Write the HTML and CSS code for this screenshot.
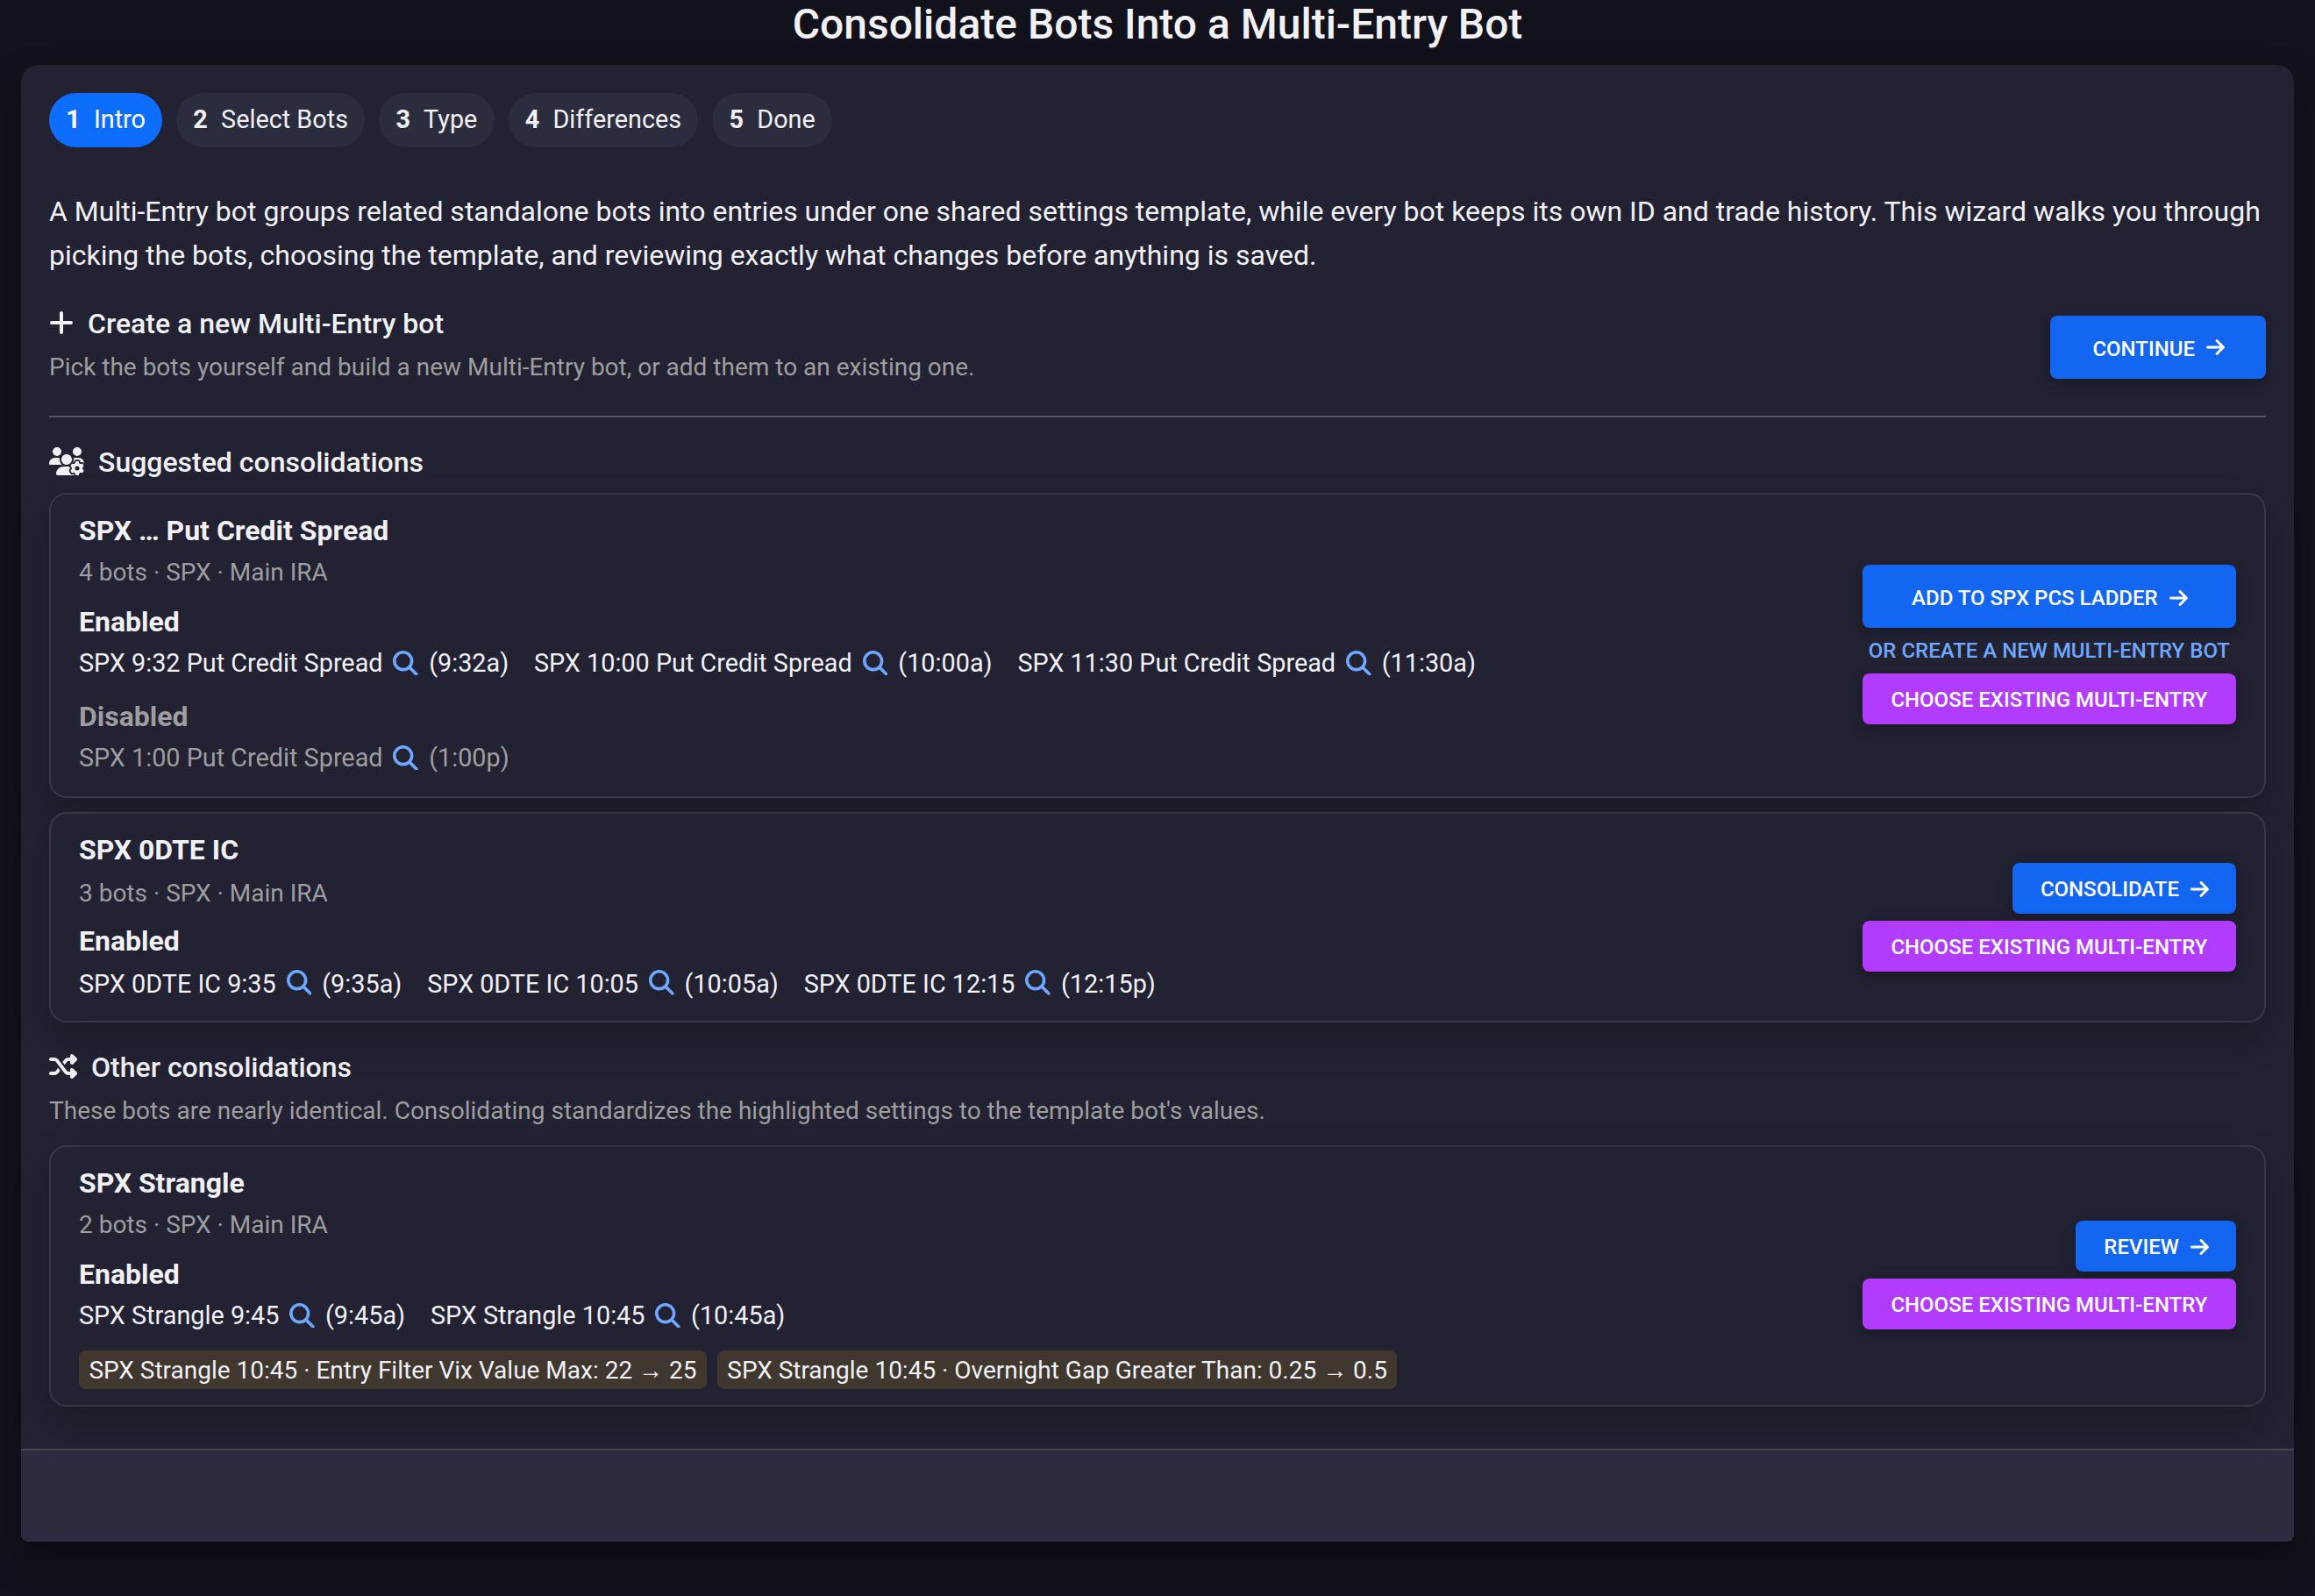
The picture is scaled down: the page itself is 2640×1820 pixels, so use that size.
FILE: index.html
```html
<!DOCTYPE html>
<html lang="en">
<head>
<meta charset="utf-8">
<title>Consolidate Bots Into a Multi-Entry Bot</title>
<link rel="stylesheet" href="styles.css">
</head>
<body>
<svg class="sprite" aria-hidden="true">
  <symbol id="arrow" viewBox="0 0 448 512"><path d="M438.6 278.6c12.5-12.5 12.5-32.8 0-45.3l-160-160c-12.5-12.5-32.8-12.5-45.3 0s-12.5 32.8 0 45.3L338.8 224 32 224c-17.7 0-32 14.3-32 32s14.3 32 32 32l306.7 0L233.4 393.4c-12.5 12.5-12.5 32.8 0 45.3s32.8 12.5 45.3 0l160-160z"/></symbol>
  <symbol id="search" viewBox="0 0 512 512"><path d="M416 208c0 45.9-14.9 88.3-40 122.7L502.6 457.4c12.5 12.5 12.5 32.8 0 45.3s-32.8 12.5-45.3 0L330.7 376c-34.4 25.2-76.8 40-122.7 40C93.1 416 0 322.9 0 208S93.1 0 208 0S416 93.1 416 208zM208 352a144 144 0 1 0 0-288 144 144 0 1 0 0 288z"/></symbol>
  <symbol id="plus" viewBox="0 0 448 512"><path d="M256 80c0-17.7-14.3-32-32-32s-32 14.3-32 32l0 144L48 224c-17.7 0-32 14.3-32 32s14.3 32 32 32l144 0 0 144c0 17.7 14.3 32 32 32s32-14.3 32-32l0-144 144 0c17.7 0 32-14.3 32-32s-14.3-32-32-32l-144 0 0-144z"/></symbol>
  <symbol id="users-gear" viewBox="0 0 640 512"><path d="M144 160A80 80 0 1 0 144 0a80 80 0 1 0 0 160zm368 0A80 80 0 1 0 512 0a80 80 0 1 0 0 160zM0 298.7C0 310.4 9.6 320 21.3 320l213.3 0c.2 0 .4 0 .7 0c-26.6-23.5-43.3-57.8-43.3-96c0-7.6 .7-15 1.9-22.3c-13.6-6.3-28.7-9.7-44.6-9.7l-42.7 0C47.8 192 0 239.8 0 298.7zM320 320c24 0 45.9-8.8 62.7-23.3c2.5-3.7 5.2-7.3 8-10.7c2.7-3.3 5.7-6.1 9-8.3C410 262.3 416 243.9 416 224c0-53-43-96-96-96s-96 43-96 96s43 96 96 96zm65.4 60.2c-10.3-5.9-18.1-16.2-20.8-28.2l-103.2 0C187.7 352 128 411.7 128 485.3c0 14.7 11.9 26.7 26.7 26.7l300.6 0c-2.1-5.2-3.2-10.9-3.2-16.4l0-3c-1.3-.7-2.7-1.5-4-2.3l-2.6 1.5c-16.8 9.7-40.5 8-54.7-9.7c-4.5-5.6-8.6-11.5-12.4-17.6l-.1-.2-.1-.2-2.4-4.1-.1-.2-.1-.2c-3.4-6.2-6.4-12.6-9-19.3c-8.2-21.2 2.2-42.6 19-52.3l2.7-1.5c0-.8 0-1.5 0-2.3s0-1.5 0-2.3l-2.7-1.5zM533.3 192l-42.7 0c-15.9 0-31 3.5-44.6 9.7c1.3 7.2 1.9 14.7 1.9 22.3c0 17.4-3.5 33.9-9.7 49c2.5 .9 4.9 2 7.1 3.3l2.6 1.5c1.3-.8 2.6-1.6 4-2.3l0-3c0-19.4 13.3-39.1 35.8-42.6c7.9-1.2 16-1.9 24.2-1.9s16.3 .6 24.2 1.9c22.5 3.5 35.8 23.2 35.8 42.6l0 3c1.3 .7 2.7 1.5 4 2.3l2.6-1.5c16.8-9.7 40.5-8 54.7 9.7c2.3 2.8 4.5 5.8 6.6 8.7c-2.1-57.1-49-102.7-106.6-102.7zm91.3 163.9c6.3-3.6 9.5-11.1 6.8-18c-2.1-5.5-4.6-10.8-7.4-15.9l-2.3-4c-3.1-5.1-6.5-9.9-10.2-14.5c-4.6-5.7-12.7-6.7-19-3l-2.9 1.7c-9.2 5.3-20.4 4-29.6-1.3s-16.1-14.5-16.1-25.1l0-3.4c0-7.3-4.9-13.8-12.1-14.9c-6.5-1-13.1-1.5-19.9-1.5s-13.4 .5-19.9 1.5c-7.2 1.1-12.1 7.6-12.1 14.9l0 3.4c0 10.6-6.9 19.8-16.1 25.1s-20.4 6.6-29.6 1.3l-2.9-1.7c-6.3-3.6-14.4-2.6-19 3c-3.7 4.6-7.1 9.5-10.2 14.6l-2.3 3.9c-2.8 5.1-5.3 10.4-7.4 15.9c-2.6 6.8 .5 14.3 6.8 17.9l2.9 1.7c9.2 5.3 13.7 15.8 13.7 26.4s-4.5 21.1-13.7 26.4l-3 1.7c-6.3 3.6-9.5 11.1-6.8 17.9c2.1 5.5 4.6 10.7 7.4 15.8l2.4 4.1c3 5.1 6.4 9.9 10.1 14.5c4.6 5.7 12.7 6.7 19 3l2.9-1.7c9.2-5.3 20.4-4 29.6 1.3s16.1 14.5 16.1 25.1l0 3.4c0 7.3 4.9 13.8 12.1 14.9c6.5 1 13.1 1.5 19.9 1.5s13.4-.5 19.9-1.5c7.2-1.1 12.1-7.6 12.1-14.9l0-3.4c0-10.6 6.9-19.8 16.1-25.1s20.4-6.6 29.6-1.3l2.9 1.7c6.3 3.6 14.4 2.6 19-3c3.7-4.6 7.1-9.4 10.1-14.5l2.4-4.2c2.8-5.1 5.3-10.3 7.4-15.8c2.6-6.8-.5-14.3-6.8-17.9l-3-1.7c-9.2-5.3-13.7-15.8-13.7-26.4s4.5-21.1 13.7-26.4l3-1.7zM472 384a40 40 0 1 1 80 0 40 40 0 1 1 -80 0z"/></symbol>
  <symbol id="shuffle" viewBox="0 0 512 512"><path d="M403.8 34.4c12-5 25.7-2.2 34.9 6.9l64 64c6 6 9.4 14.1 9.4 22.6s-3.4 16.6-9.4 22.6l-64 64c-9.2 9.2-22.9 11.9-34.9 6.9s-19.8-16.6-19.8-29.6l0-32-32 0c-10.1 0-19.6 4.7-25.6 12.8L284 229.3 244 176l31.2-41.6C293.3 110.2 321.8 96 352 96l32 0 0-32c0-12.9 7.8-24.6 19.8-29.6zM164 282.7L204 336l-31.2 41.6C154.7 401.8 126.2 416 96 416l-64 0c-17.7 0-32-14.3-32-32s14.3-32 32-32l64 0c10.1 0 19.6-4.7 25.6-12.8L164 282.7zm274.6 188c-9.2 9.2-22.9 11.9-34.9 6.9s-19.8-16.6-19.8-29.6l0-32-32 0c-30.2 0-58.7-14.2-76.8-38.4L121.6 172.8c-6-8.1-15.5-12.8-25.6-12.8l-64 0c-17.7 0-32-14.3-32-32s14.3-32 32-32l64 0c30.2 0 58.7 14.2 76.8 38.4L326.4 339.2c6 8.1 15.5 12.8 25.6 12.8l32 0 0-32c0-12.9 7.8-24.6 19.8-29.6s25.7-2.2 34.9 6.9l64 64c6 6 9.4 14.1 9.4 22.6s-3.4 16.6-9.4 22.6l-64 64z"/></symbol>
</svg>

<h1 class="page-title">Consolidate Bots Into a Multi-Entry Bot</h1>

<main class="panel">
  <div class="panel-body">
    <nav class="steps">
      <span class="step active"><b>1</b>Intro</span>
      <span class="step"><b>2</b>Select Bots</span>
      <span class="step"><b>3</b>Type</span>
      <span class="step"><b>4</b>Differences</span>
      <span class="step"><b>5</b>Done</span>
    </nav>

    <p class="intro">A Multi-Entry bot groups related standalone bots into entries under one shared settings template, while every bot keeps its own ID and trade history. This wizard walks you through picking the bots, choosing the template, and reviewing exactly what changes before anything is saved.</p>

    <section class="create">
      <div class="create-text">
        <h2 class="heading"><svg class="icon-plus"><use href="#plus"/></svg>Create a new Multi-Entry bot</h2>
        <p class="sub">Pick the bots yourself and build a new Multi-Entry bot, or add them to an existing one.</p>
      </div>
      <button class="btn primary large">Continue<svg class="icon-arrow"><use href="#arrow"/></svg></button>
    </section>

    <hr class="divider">

    <section>
      <h2 class="heading"><svg class="icon-users"><use href="#users-gear"/></svg>Suggested consolidations</h2>
      <div class="cards">
        <article class="card card-ladder">
          <div class="details">
            <h3 class="name">SPX … Put Credit Spread</h3>
            <p class="meta">4 bots · SPX · Main IRA</p>
            <h4 class="state">Enabled</h4>
            <div class="bots">
              <span class="bot">SPX 9:32 Put Credit Spread<svg class="icon-search"><use href="#search"/></svg>(9:32a)</span>
              <span class="bot">SPX 10:00 Put Credit Spread<svg class="icon-search"><use href="#search"/></svg>(10:00a)</span>
              <span class="bot">SPX 11:30 Put Credit Spread<svg class="icon-search"><use href="#search"/></svg>(11:30a)</span>
            </div>
            <h4 class="state off">Disabled</h4>
            <div class="bots off">
              <span class="bot">SPX 1:00 Put Credit Spread<svg class="icon-search"><use href="#search"/></svg>(1:00p)</span>
            </div>
          </div>
          <div class="actions fill">
            <button class="btn primary large">Add to SPX PCS Ladder<svg class="icon-arrow"><use href="#arrow"/></svg></button>
            <a class="alt">Or create a new Multi-Entry bot</a>
            <button class="btn purple">Choose existing Multi-Entry</button>
          </div>
        </article>

        <article class="card card-condor">
          <div class="details">
            <h3 class="name">SPX 0DTE IC</h3>
            <p class="meta">3 bots · SPX · Main IRA</p>
            <h4 class="state">Enabled</h4>
            <div class="bots">
              <span class="bot">SPX 0DTE IC 9:35<svg class="icon-search"><use href="#search"/></svg>(9:35a)</span>
              <span class="bot">SPX 0DTE IC 10:05<svg class="icon-search"><use href="#search"/></svg>(10:05a)</span>
              <span class="bot">SPX 0DTE IC 12:15<svg class="icon-search"><use href="#search"/></svg>(12:15p)</span>
            </div>
          </div>
          <div class="actions">
            <button class="btn primary">Consolidate<svg class="icon-arrow"><use href="#arrow"/></svg></button>
            <button class="btn purple">Choose existing Multi-Entry</button>
          </div>
        </article>
      </div>
    </section>

    <section class="other">
      <h2 class="heading"><svg class="icon-shuffle"><use href="#shuffle"/></svg>Other consolidations</h2>
      <p class="sub">These bots are nearly identical. Consolidating standardizes the highlighted settings to the template bot's values.</p>
      <div class="cards">
        <article class="card card-strangle">
          <div class="details">
            <h3 class="name">SPX Strangle</h3>
            <p class="meta">2 bots · SPX · Main IRA</p>
            <h4 class="state">Enabled</h4>
            <div class="bots">
              <span class="bot">SPX Strangle 9:45<svg class="icon-search"><use href="#search"/></svg>(9:45a)</span>
              <span class="bot">SPX Strangle 10:45<svg class="icon-search"><use href="#search"/></svg>(10:45a)</span>
            </div>
            <div class="chips">
              <span class="chip">SPX Strangle 10:45 · Entry Filter Vix Value Max: 22 → 25</span>
              <span class="chip">SPX Strangle 10:45 · Overnight Gap Greater Than: 0.25 → 0.5</span>
            </div>
          </div>
          <div class="actions">
            <button class="btn primary">Review<svg class="icon-arrow"><use href="#arrow"/></svg></button>
            <button class="btn purple">Choose existing Multi-Entry</button>
          </div>
        </article>
      </div>
    </section>
  </div>
  <footer class="panel-footer"></footer>
</main>
</body>
</html>
```
FILE: styles.css
```css
* { box-sizing: border-box; }

body {
  margin: 0;
  height: 1820px;
  overflow: hidden;
  background: #12121c;
  color: #f0f0f5;
  font-family: Roboto, "Liberation Sans", sans-serif;
}

h1, h2, h3, h4, p { margin: 0; }
svg { fill: currentColor; flex: none; display: block; }
.sprite { display: none; }

.page-title {
  margin-bottom: 18px;
  font-size: 48px;
  line-height: 56px;
  font-weight: 500;
  text-align: center;
}

.panel {
  margin: 0 24px;
  border-radius: 20px 20px 8px 8px;
  background: #222233;
  box-shadow: 0 20px 40px rgba(0, 0, 0, .35);
}
.panel-body { height: 1578px; padding: 32px 32px 0; }
.panel-footer {
  height: 106px;
  border-top: 2px solid #434358;
  border-radius: 0 0 8px 8px;
  background: #2c2c41;
}

.steps { display: flex; gap: 16px; }
.step {
  display: flex;
  align-items: center;
  gap: 15.2px;
  height: 62px;
  padding: 0 19.2px 2px;
  border-radius: 31px;
  background: #2c2c3f;
  font-size: 28.8px;
}
.step b { font-weight: 700; }
.step.active { background: #0d6efd; color: #fff; }

.intro { margin-top: 48px; font-size: 32px; line-height: 50px; }

.create {
  display: flex;
  justify-content: space-between;
  align-items: center;
  height: 106px;
  margin-top: 27px;
}
.create-text { align-self: flex-start; }

.heading {
  display: flex;
  align-items: center;
  gap: 16px;
  font-size: 32px;
  line-height: 52px;
  font-weight: 500;
}
.heading svg { margin-bottom: 2px; }
.sub { padding-top: 1px; color: #9e9e9e; font-size: 28px; line-height: 46px; }

.icon-plus { width: 28px; height: 32px; }
.icon-users { width: 40px; height: 32px; }
.icon-shuffle { width: 32px; height: 32px; }
.icon-arrow { width: 21px; height: 24px; }
.icon-search { width: 28.8px; height: 28.8px; color: #6ea8fe; }

.divider { height: 2px; margin: 25px 0; border: 0; background: #555568; }

.cards { display: flex; flex-direction: column; gap: 16px; margin-top: 9px; }
.card {
  position: relative;
  display: flex;
  justify-content: space-between;
  align-items: center;
  padding: 0 32px;
  border: 2px solid #38374a;
  border-radius: 20px;
  background: #222233;
  box-shadow: 0 20px 40px rgba(0, 0, 0, .22);
}
.card-ladder { height: 348px; }
.card-condor { height: 240px; }
.card-strangle { height: 298px; }

.details { align-self: flex-start; padding-top: 16px; }
.name { font-size: 32px; line-height: 50px; font-weight: 700; }
.meta { margin-top: 1px; color: #9e9e9e; font-size: 28px; line-height: 44px; }
.state { margin-top: 11px; font-size: 32px; line-height: 46px; font-weight: 700; }
.bots { display: flex; gap: 28.8px; margin-top: 1px; font-size: 28.8px; line-height: 46px; }
.bots + .state { margin-top: 15px; }
.bot { display: flex; align-items: center; gap: 11.9px; }
.off { color: #9e9e9e; }

.card-condor .meta { margin-top: 3px; }
.card-condor .state { margin-top: 9px; }
.card-condor .bots { margin-top: 3px; }
.card-condor .icon-search { margin-bottom: 3px; }

.chips { display: flex; gap: 12px; margin-top: 17px; }
.chip {
  height: 44px;
  padding: 2px 11.4px 0;
  border-radius: 8px;
  background: #40372e;
  font-size: 28px;
  line-height: 42px;
}

.actions { display: flex; flex-direction: column; align-items: flex-end; gap: 8px; }
.actions.fill { align-items: stretch; text-align: center; }
.card-ladder .actions, .card-strangle .actions { padding-bottom: 2px; }
.btn {
  display: flex;
  align-items: center;
  justify-content: center;
  gap: 13px;
  height: 58px;
  padding: 2px 31px 0 32.4px;
  border: 0;
  border-radius: 8px;
  color: #fff;
  font: 500 24px/1 Roboto, "Liberation Sans", sans-serif;
  text-transform: uppercase;
  box-shadow: 0 4px 10px rgba(0, 0, 0, .2), 0 4px 20px rgba(0, 0, 0, .1);
}
.btn.large { height: 72px; padding: 3px 47px 0 48px; }
.create .icon-arrow { margin-bottom: 3px; }
.primary { background: #1266f1; }
.btn.purple { padding: 2px 32.6px 0; background: #b23cfd; }
.alt {
  color: #6ea8fe;
  font-size: 24px;
  line-height: 36px;
  font-weight: 500;
  text-transform: uppercase;
}

.other { margin-top: 25px; }
.other .cards { margin-top: 16px; }
```
